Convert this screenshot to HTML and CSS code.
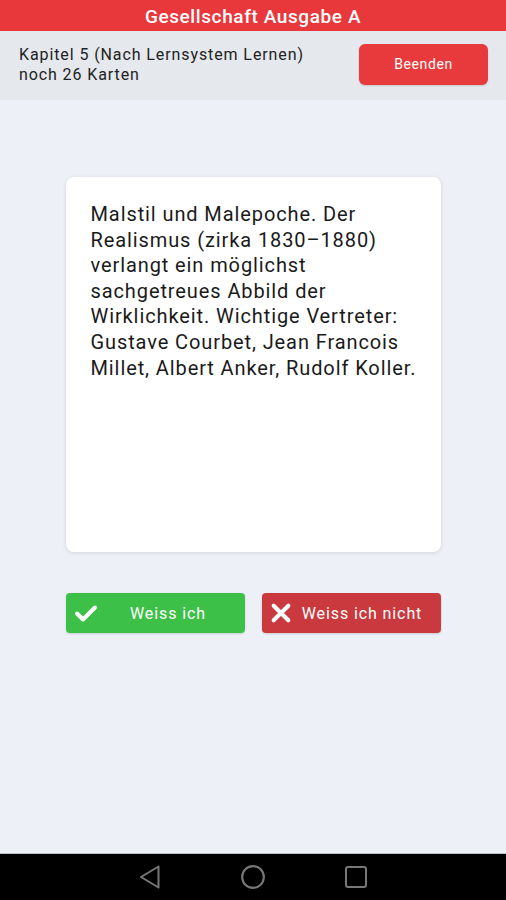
FILE: index.html
```html
<!DOCTYPE html>
<html lang="de">
    <head>
        <meta charset="UTF-8" />
        <meta name="viewport" content="width=device-width, initial-scale=1.0" />
        <title>Gesellschaft Ausgabe A</title>
        <link rel="stylesheet" href="styles.css">
    </head>
    <body>
        <div class="app">
            <div class="titlebar">Gesellschaft Ausgabe A</div>
            <div class="subheader">
                <div class="info">
                    <div>Kapitel 5 (Nach Lernsystem Lernen)</div>
                    <div>noch 26 Karten</div>
                </div>
                <button class="stop">Beenden</button>
            </div>
            <div class="content">
                <div class="card">
                    <p>Malstil und Malepoche. Der Realismus (zirka 1830–1880) verlangt ein möglichst sachgetreues Abbild der Wirklichkeit. Wichtige Vertreter: Gustave Courbet, Jean Francois Millet, Albert Anker, Rudolf Koller.</p>
                </div>
                <div class="answers">
                    <button class="answer yes">
                        <svg class="icon" viewBox="0 0 24 24" width="24" height="24"><path d="M3 12.5l6 6L21 6.5" fill="none" stroke="#fff" stroke-width="4" stroke-linecap="round" stroke-linejoin="round"/></svg>
                        <span>Weiss ich</span>
                    </button>
                    <button class="answer no">
                        <svg class="icon" viewBox="0 0 24 24" width="22" height="22"><path d="M4 4L20 20M20 4L4 20" fill="none" stroke="#fff" stroke-width="4.5" stroke-linecap="round"/></svg>
                        <span>Weiss ich nicht</span>
                    </button>
                </div>
            </div>
            <div class="navbar">
                <svg viewBox="0 0 24 24" width="24" height="24"><path d="M20.5 1.5L3 12L20.5 22.5Z" fill="none" stroke="#777" stroke-width="2" stroke-linejoin="round"/></svg>
                <svg viewBox="0 0 24 24" width="26" height="26"><circle cx="12" cy="12" r="10" fill="none" stroke="#777" stroke-width="2"/></svg>
                <svg viewBox="0 0 24 24" width="24" height="24"><rect x="2" y="2" width="20" height="20" rx="2" fill="none" stroke="#777" stroke-width="2"/></svg>
            </div>
        </div>
    </body>
</html>
```

FILE: styles.css
```css
body {
    margin: 0;
    font-family: Roboto, "Noto Sans", sans-serif;
    background-color: #edf0f6;
}
.app {
    display: flex;
    flex-direction: column;
    height: 900px;
}
.titlebar {
    height: 31px;
    line-height: 33px;
    background-color: #e8383b;
    color: #fff;
    font-size: 19px;
    font-weight: 500;
    letter-spacing: 0.6px;
    text-align: center;
}
.subheader {
    height: 69px;
    background-color: #e5e8ed;
    display: flex;
    align-items: center;
    justify-content: space-between;
    padding: 0 18px 0 19px;
    box-sizing: border-box;
}
.info {
    font-size: 16px;
    line-height: 20px;
    letter-spacing: 0.9px;
    color: #222;
    margin-top: -2px;
}
.stop {
    width: 129px;
    height: 41px;
    margin-top: -3px;
    background-color: #e83a3c;
    color: #fff;
    border: none;
    border-radius: 6px;
    font-family: inherit;
    font-size: 14px;
    letter-spacing: 0.6px;
    box-shadow: 0 1px 2px rgba(0, 0, 0, 0.15);
}
.content {
    flex: 1;
    display: flex;
    flex-direction: column;
    align-items: center;
    padding-top: 77px;
}
.card {
    width: 375px;
    height: 375px;
    box-sizing: border-box;
    background-color: #fff;
    border-radius: 8px;
    box-shadow: 0 1px 4px rgba(0, 0, 0, 0.12);
    padding: 25px 18px 0 25px;
}
.card p {
    margin: 0;
    font-size: 20px;
    line-height: 25.6px;
    letter-spacing: 0.9px;
    color: #1a1a1a;
}
.answers {
    display: flex;
    gap: 17px;
    margin-top: 41px;
    width: 375px;
}
.answer {
    flex: 1;
    height: 40px;
    border: none;
    border-radius: 4px;
    color: #fff;
    font-family: inherit;
    font-size: 16px;
    letter-spacing: 0.9px;
    display: flex;
    align-items: center;
    padding: 0 0 0 8px;
    box-shadow: 0 1px 2px rgba(0, 0, 0, 0.15);
}
.answer span {
    flex: 1;
    text-align: center;
}
.yes {
    background-color: #3cc047;
}
.yes span {
    padding-right: 6px;
}
.no {
    background-color: #c9393e;
}
.no span {
    padding-right: 8px;
}
.navbar {
    height: 46px;
    background-color: #000;
    border-top: 1px solid #bfc2c7;
    display: flex;
    align-items: center;
    justify-content: center;
    gap: 78px;
}
```
